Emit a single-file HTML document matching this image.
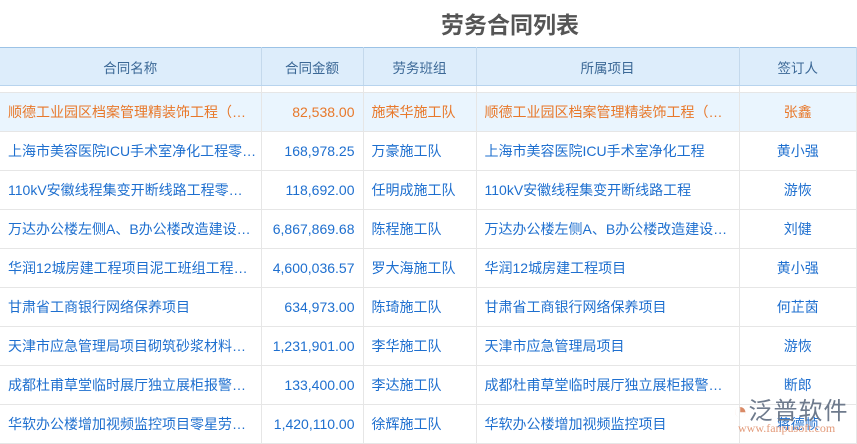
<!DOCTYPE html><html><head><meta charset="utf-8"><style>
body{margin:0;width:857px;height:442px;overflow:hidden;background:#fff;font-family:"Liberation Sans","Noto Sans CJK SC",sans-serif;position:relative}
.t{position:absolute;left:441px;top:6px;font-size:23px;font-weight:bold;color:#555}
table{position:absolute;left:0;top:47px;border-collapse:collapse;width:857px;table-layout:fixed;font-size:14px}
th{height:37px;padding:0;background:#ddedfb;color:#3b6896;font-weight:normal;font-size:13.5px;border-top:1px solid #9cc3e6;border-bottom:1px solid #b8d4ee;border-right:1px solid #c4d9ec}
td{height:38px;padding:0 8px;border-bottom:1px solid #e6e6e6;border-right:1px solid #e6e6e6;color:#1e6fcf;white-space:nowrap;overflow:hidden}
tr.g td{height:6px;padding:0}
tr.h td{background:#eaf5fe;color:#e8782a}
.r{text-align:right}.c{text-align:center}
.logo{position:absolute;left:733px;top:391px;font-size:24px;color:#6e7a8c;letter-spacing:1px}
.url{position:absolute;left:738px;top:421px;font-size:12px;color:#e39b7b;font-family:"Liberation Serif",serif}
</style></head><body>
<div class="t">劳务合同列表</div>
<table><colgroup><col style="width:261px"><col style="width:102px"><col style="width:113px"><col style="width:263px"><col></colgroup>
<tr><th>合同名称</th><th>合同金额</th><th>劳务班组</th><th>所属项目</th><th>签订人</th></tr>
<tr class="g"><td></td><td></td><td></td><td></td><td></td></tr>
<tr class="h"><td>顺德工业园区档案管理精装饰工程（…</td><td class="r">82,538.00</td><td>施荣华施工队</td><td>顺德工业园区档案管理精装饰工程（…</td><td class="c">张鑫</td></tr>
<tr><td>上海市美容医院ICU手术室净化工程零…</td><td class="r">168,978.25</td><td>万豪施工队</td><td>上海市美容医院ICU手术室净化工程</td><td class="c">黄小强</td></tr>
<tr><td>110kV安徽线程集变开断线路工程零…</td><td class="r">118,692.00</td><td>任明成施工队</td><td>110kV安徽线程集变开断线路工程</td><td class="c">游恢</td></tr>
<tr><td>万达办公楼左侧A、B办公楼改造建设…</td><td class="r">6,867,869.68</td><td>陈程施工队</td><td>万达办公楼左侧A、B办公楼改造建设…</td><td class="c">刘健</td></tr>
<tr><td>华润12城房建工程项目泥工班组工程…</td><td class="r">4,600,036.57</td><td>罗大海施工队</td><td>华润12城房建工程项目</td><td class="c">黄小强</td></tr>
<tr><td>甘肃省工商银行网络保养项目</td><td class="r">634,973.00</td><td>陈琦施工队</td><td>甘肃省工商银行网络保养项目</td><td class="c">何芷茵</td></tr>
<tr><td>天津市应急管理局项目砌筑砂浆材料…</td><td class="r">1,231,901.00</td><td>李华施工队</td><td>天津市应急管理局项目</td><td class="c">游恢</td></tr>
<tr><td>成都杜甫草堂临时展厅独立展柜报警…</td><td class="r">133,400.00</td><td>李达施工队</td><td>成都杜甫草堂临时展厅独立展柜报警…</td><td class="c">断郎</td></tr>
<tr><td>华软办公楼增加视频监控项目零星劳…</td><td class="r">1,420,110.00</td><td>徐辉施工队</td><td>华软办公楼增加视频监控项目</td><td class="c">蒋德帧</td></tr>
</table>
<div class="logo"><span style="color:#d98a66">◔</span>泛普软件</div>
<div class="url">www.fanpusoft.com</div>
</body></html>
